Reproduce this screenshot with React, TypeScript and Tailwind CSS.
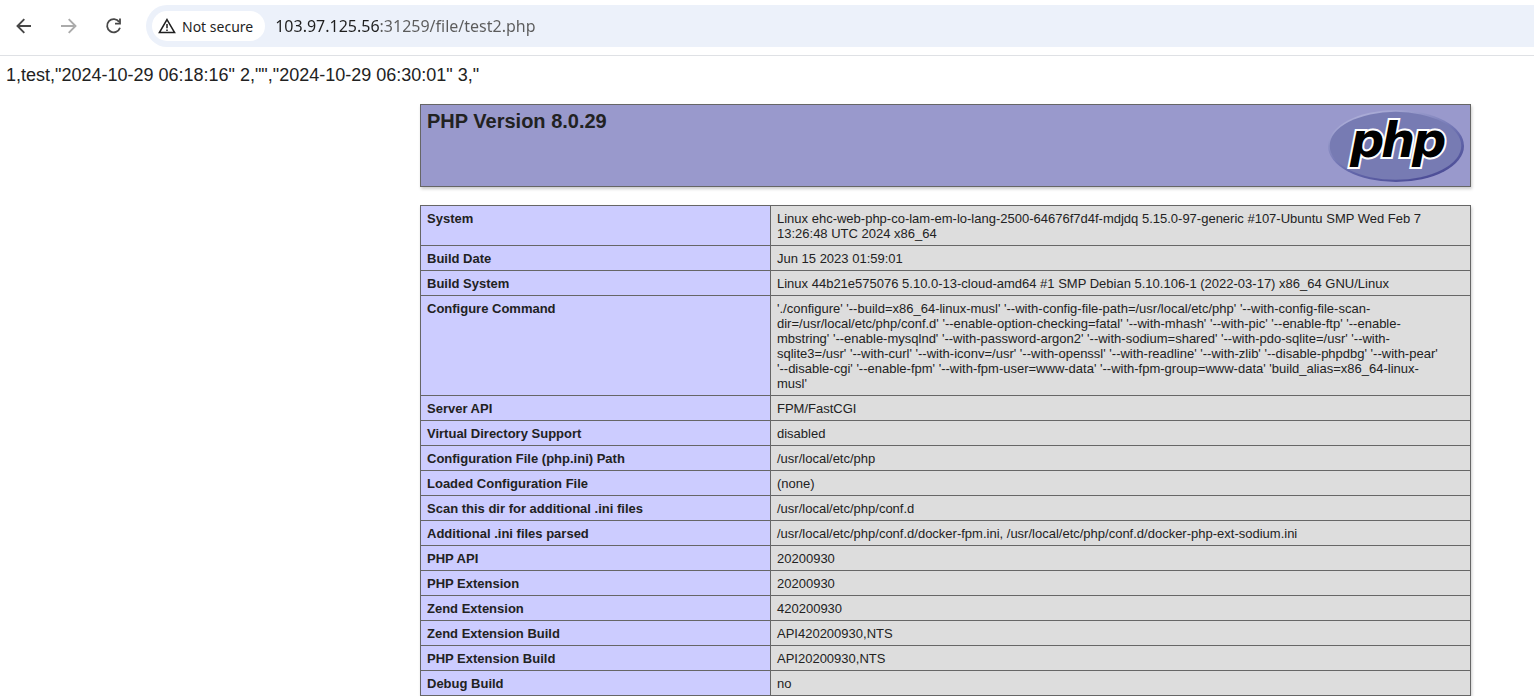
import React from "react";

type Row = { label: string; lines: string[] };

const rows: Row[] = [
  {
    label: "System",
    lines: [
      "Linux ehc-web-php-co-lam-em-lo-lang-2500-64676f7d4f-mdjdq 5.15.0-97-generic #107-Ubuntu SMP Wed Feb 7",
      "13:26:48 UTC 2024 x86_64",
    ],
  },
  { label: "Build Date", lines: ["Jun 15 2023 01:59:01"] },
  {
    label: "Build System",
    lines: ["Linux 44b21e575076 5.10.0-13-cloud-amd64 #1 SMP Debian 5.10.106-1 (2022-03-17) x86_64 GNU/Linux"],
  },
  {
    label: "Configure Command",
    lines: [
      "'./configure' '--build=x86_64-linux-musl' '--with-config-file-path=/usr/local/etc/php' '--with-config-file-scan-",
      "dir=/usr/local/etc/php/conf.d' '--enable-option-checking=fatal' '--with-mhash' '--with-pic' '--enable-ftp' '--enable-",
      "mbstring' '--enable-mysqlnd' '--with-password-argon2' '--with-sodium=shared' '--with-pdo-sqlite=/usr' '--with-",
      "sqlite3=/usr' '--with-curl' '--with-iconv=/usr' '--with-openssl' '--with-readline' '--with-zlib' '--disable-phpdbg' '--with-pear'",
      "'--disable-cgi' '--enable-fpm' '--with-fpm-user=www-data' '--with-fpm-group=www-data' 'build_alias=x86_64-linux-",
      "musl'",
    ],
  },
  { label: "Server API", lines: ["FPM/FastCGI"] },
  { label: "Virtual Directory Support", lines: ["disabled"] },
  { label: "Configuration File (php.ini) Path", lines: ["/usr/local/etc/php"] },
  { label: "Loaded Configuration File", lines: ["(none)"] },
  { label: "Scan this dir for additional .ini files", lines: ["/usr/local/etc/php/conf.d"] },
  {
    label: "Additional .ini files parsed",
    lines: ["/usr/local/etc/php/conf.d/docker-fpm.ini, /usr/local/etc/php/conf.d/docker-php-ext-sodium.ini"],
  },
  { label: "PHP API", lines: ["20200930"] },
  { label: "PHP Extension", lines: ["20200930"] },
  { label: "Zend Extension", lines: ["420200930"] },
  { label: "Zend Extension Build", lines: ["API420200930,NTS"] },
  { label: "PHP Extension Build", lines: ["API20200930,NTS"] },
  { label: "Debug Build", lines: ["no"] },
];

function PhpLogo() {
  return (
    <svg width="136" height="74" viewBox="0 0 136 74" role="img" aria-label="PHP logo" className="shrink-0">
      <defs>
        <linearGradient id="rim" x1="0.2" y1="0" x2="0.8" y2="1">
          <stop offset="0" stopColor="#b4b5dc" />
          <stop offset="0.3" stopColor="#8c8fc4" />
          <stop offset="0.6" stopColor="#6468ab" />
          <stop offset="1" stopColor="#484893" />
        </linearGradient>
      </defs>
      <ellipse cx="68" cy="37" rx="68" ry="36" fill="url(#rim)" />
      <ellipse cx="67.5" cy="36.8" rx="65.8" ry="34" fill="#777bb3" />
      <text
        x="22 53 84"
        y="48"
        fontFamily="'DejaVu Sans', sans-serif"
        fontWeight="bold"
        fontStyle="italic"
        fontSize="48"
        fill="#000"
        stroke="#fff"
        strokeWidth="4"
        strokeLinejoin="miter"
        paintOrder="stroke"
      >
        php
      </text>
    </svg>
  );
}

function Toolbar() {
  return (
    <header className="flex h-14 items-start border-b border-[#dfe1e5] pt-[5px]">
      <nav className="flex h-[42px] w-[146px] shrink-0 items-center gap-[25px] pl-[14px] text-[#474747]">
        <button type="button" aria-label="Back">
          <svg width="20" height="20" viewBox="0 0 20 20" fill="none" stroke="currentColor" strokeWidth="1.9">
            <path d="M17 10H4M10.3 3.2L3.5 10l6.800 6.800" />
          </svg>
        </button>
        <button type="button" aria-label="Forward" className="text-[#ababab]">
          <svg width="20" height="20" viewBox="0 0 20 20" fill="none" stroke="currentColor" strokeWidth="1.9">
            <path d="M2 10h13M9.700 3.200L16.500 10l-6.800 6.800" />
          </svg>
        </button>
        <button type="button" aria-label="Reload">
          <svg width="20" height="20" viewBox="0 0 20 20" fill="none" stroke="currentColor" strokeWidth="1.8">
            <path d="M15.200 6A6.600 6.600 0 1 0 16 11.800" />
            <path d="M16 2.600v5h-5" />
          </svg>
        </button>
      </nav>
      <div className="flex h-[42px] min-w-0 flex-1 items-center gap-2.5 rounded-l-full bg-[#ecf1fa] pl-1.5">
        <button
          type="button"
          className="flex h-[30px] shrink-0 items-center gap-1.5 rounded-full bg-white pr-3 pl-1.5 font-['Noto_Sans',sans-serif] text-[14px] text-[#1f1f1f]"
        >
          <svg width="18" height="18" viewBox="0 0 18 18" fill="none" stroke="currentColor" strokeWidth="1.5">
            <path d="M9 2.600L16.600 15.600H1.400z" />
            <path d="M9 7v4.300M9 12.400v1.600" />
          </svg>
          Not secure
        </button>
        <input
          type="text"
          aria-label="Address"
          defaultValue="103.97.125.56:31259/file/test2.php"
          className="min-w-0 flex-1 bg-linear-to-r from-[#1f1f1f] from-[104px] to-[#5b5b5b] to-[104px] bg-clip-text font-['Noto_Sans',sans-serif] text-[16px] text-transparent outline-none"
        />
      </div>
    </header>
  );
}

export default function App() {
  return (
    <div className="bg-white font-['Liberation_Sans',Arial,sans-serif] text-[#222]">
      <Toolbar />
      <main>
        <p className="px-1.5 pt-2 text-[18px] leading-[22px]">
          1,test,"2024-10-29 06:18:16" 2,"","2024-10-29 06:30:01" 3,"
        </p>
        <div className="mt-[18px] mr-[63px] ml-auto max-w-[1051px]">
          <div className="flex h-[83px] items-start justify-between border border-[#666] bg-[#9999cc] pt-1 pr-1.5 pl-1.5 shadow-[1px_2px_3px_#ccc]">
            <h1 className="text-[20px] leading-6 font-bold">PHP Version 8.0.29</h1>
            <PhpLogo />
          </div>
          <table className="mt-[18px] w-full table-fixed border-collapse text-[13px] leading-[15px] shadow-[1px_2px_3px_#ccc]">
            <colgroup>
              <col className="w-1/3" />
              <col />
            </colgroup>
            <tbody>
              {rows.map((row) => (
                <tr key={row.label}>
                  <th scope="row" className="border border-[#666] bg-[#ccccff] px-1.5 pt-[5px] pb-1 text-left align-top font-bold">
                    {row.label}
                  </th>
                  <td className="border border-[#666] bg-[#dddddd] px-1.5 pt-[5px] pb-1 align-top">
                    {row.lines.map((line, i) => (
                      <React.Fragment key={line}>
                        {i > 0 && <br />}
                        {line}
                      </React.Fragment>
                    ))}
                  </td>
                </tr>
              ))}
            </tbody>
          </table>
        </div>
      </main>
    </div>
  );
}
